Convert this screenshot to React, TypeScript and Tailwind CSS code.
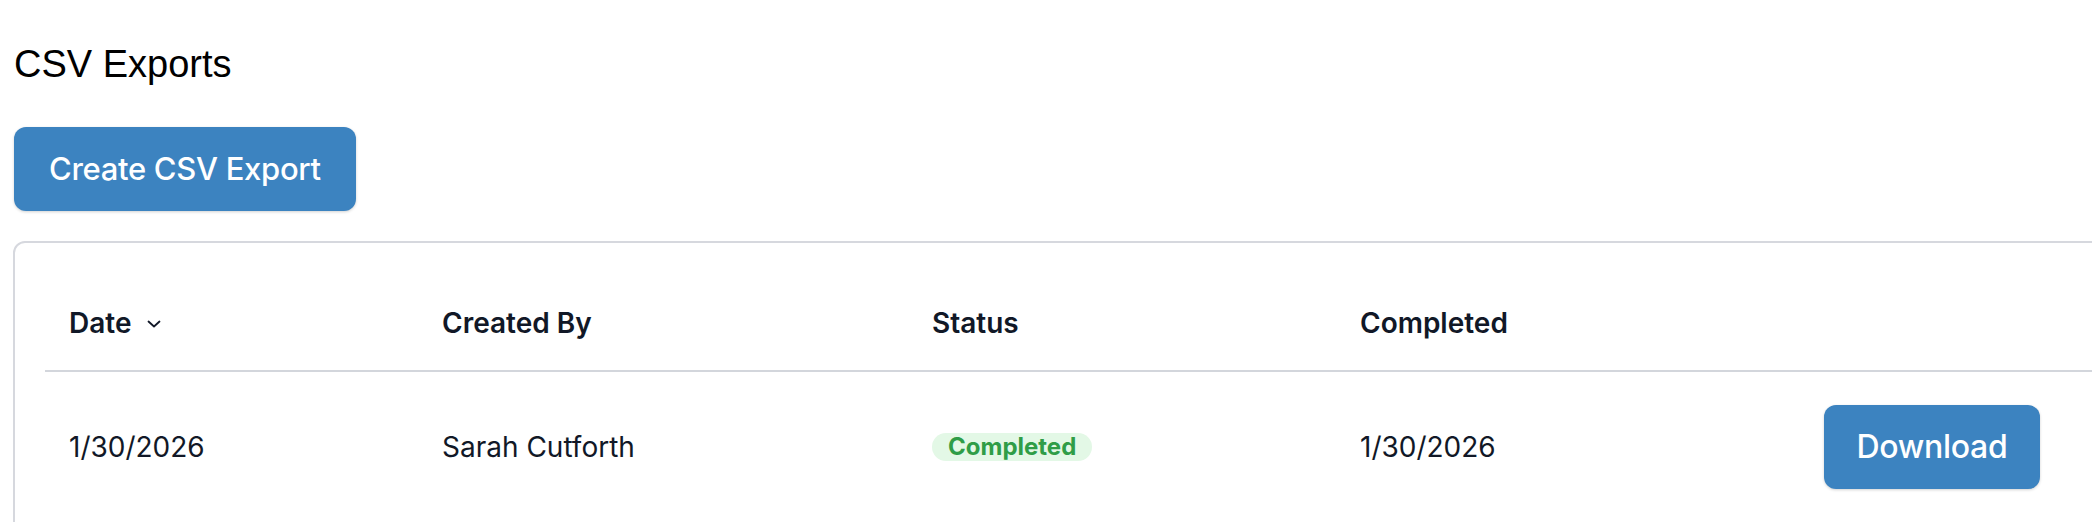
const exportsList = [
  {
    id: 1,
    date: '1/30/2026',
    createdBy: 'Sarah Cutforth',
    status: 'Completed',
    completed: '1/30/2026',
  },
]

const SortChevron = () => (
  <svg
    width="14"
    height="8"
    viewBox="0 0 14 8"
    fill="none"
    className="ml-[16px] mt-[2px]"
  >
    <path
      d="M1.5 1.5l5.5 5 5.5-5"
      stroke="#111827"
      strokeWidth="1.8"
      strokeLinecap="round"
      strokeLinejoin="round"
    />
  </svg>
)

export default function App() {
  return (
    <div className="w-full overflow-hidden bg-white font-['Inter',sans-serif]">
      <div className="pl-[13px] pt-[42px]">
        <h1 className="font-['Liberation_Sans',Arial,sans-serif] text-[38px] leading-[44px] font-normal text-black pl-[1px]">
          CSV Exports
        </h1>

        <button className="mt-[41px] ml-[1px] h-[84px] px-[35px] rounded-[12px] bg-[#3c83c0] text-white text-[31px] font-medium tracking-[-0.3px] shadow-[0_1px_3px_rgba(0,0,0,0.18)]">
          Create CSV Export
        </button>

        {/* exports table */}
        <div className="mt-[30px] w-[2160px] border-2 border-[#d6d8de] rounded-[12px] pl-[30px] pt-[32px] pb-[30px]">
          <table className="w-[2100px] table-fixed border-collapse">
            <thead>
              <tr className="border-b-2 border-[#d3d6dc]">
                <th className="w-[373px] h-[96px] px-[24px] text-left text-[28px] font-semibold text-[#111827]">
                  <div className="flex items-center">
                    Date
                    <SortChevron />
                  </div>
                </th>
                <th className="w-[490px] px-[24px] text-left text-[28px] font-semibold text-[#111827]">
                  Created By
                </th>
                <th className="w-[428px] px-[24px] text-left text-[28px] font-semibold text-[#111827]">
                  Status
                </th>
                <th className="w-[464px] px-[24px] text-left text-[28px] font-semibold text-[#111827]">
                  Completed
                </th>
                <th className="px-[24px]" />
              </tr>
            </thead>
            <tbody>
              {exportsList.map((record) => (
                <tr key={record.id}>
                  <td className="px-[24px] pt-[33px] pb-[32px] text-[28px] text-[#111827]">
                    {record.date}
                  </td>
                  <td className="px-[24px] pt-[33px] pb-[32px] text-[28px] text-[#111827]">
                    {record.createdBy}
                  </td>
                  <td className="px-[24px] pt-[33px] pb-[32px]">
                    <span className="inline-flex h-[28px] items-center rounded-full bg-[#e3f8e6] px-[16px] text-[24px] font-bold text-[#2f9d47] align-middle">
                      {record.status}
                    </span>
                  </td>
                  <td className="px-[24px] pt-[33px] pb-[32px] text-[28px] text-[#111827]">
                    {record.completed}
                  </td>
                  <td className="px-[24px] pt-[33px] pb-[32px] text-left">
                    <button className="h-[84px] w-[216px] rounded-[12px] bg-[#3c83c0] text-white text-[32px] font-medium tracking-[-0.3px] shadow-[0_1px_3px_rgba(0,0,0,0.18)]">
                      Download
                    </button>
                  </td>
                </tr>
              ))}
            </tbody>
          </table>
        </div>
      </div>
    </div>
  )
}
